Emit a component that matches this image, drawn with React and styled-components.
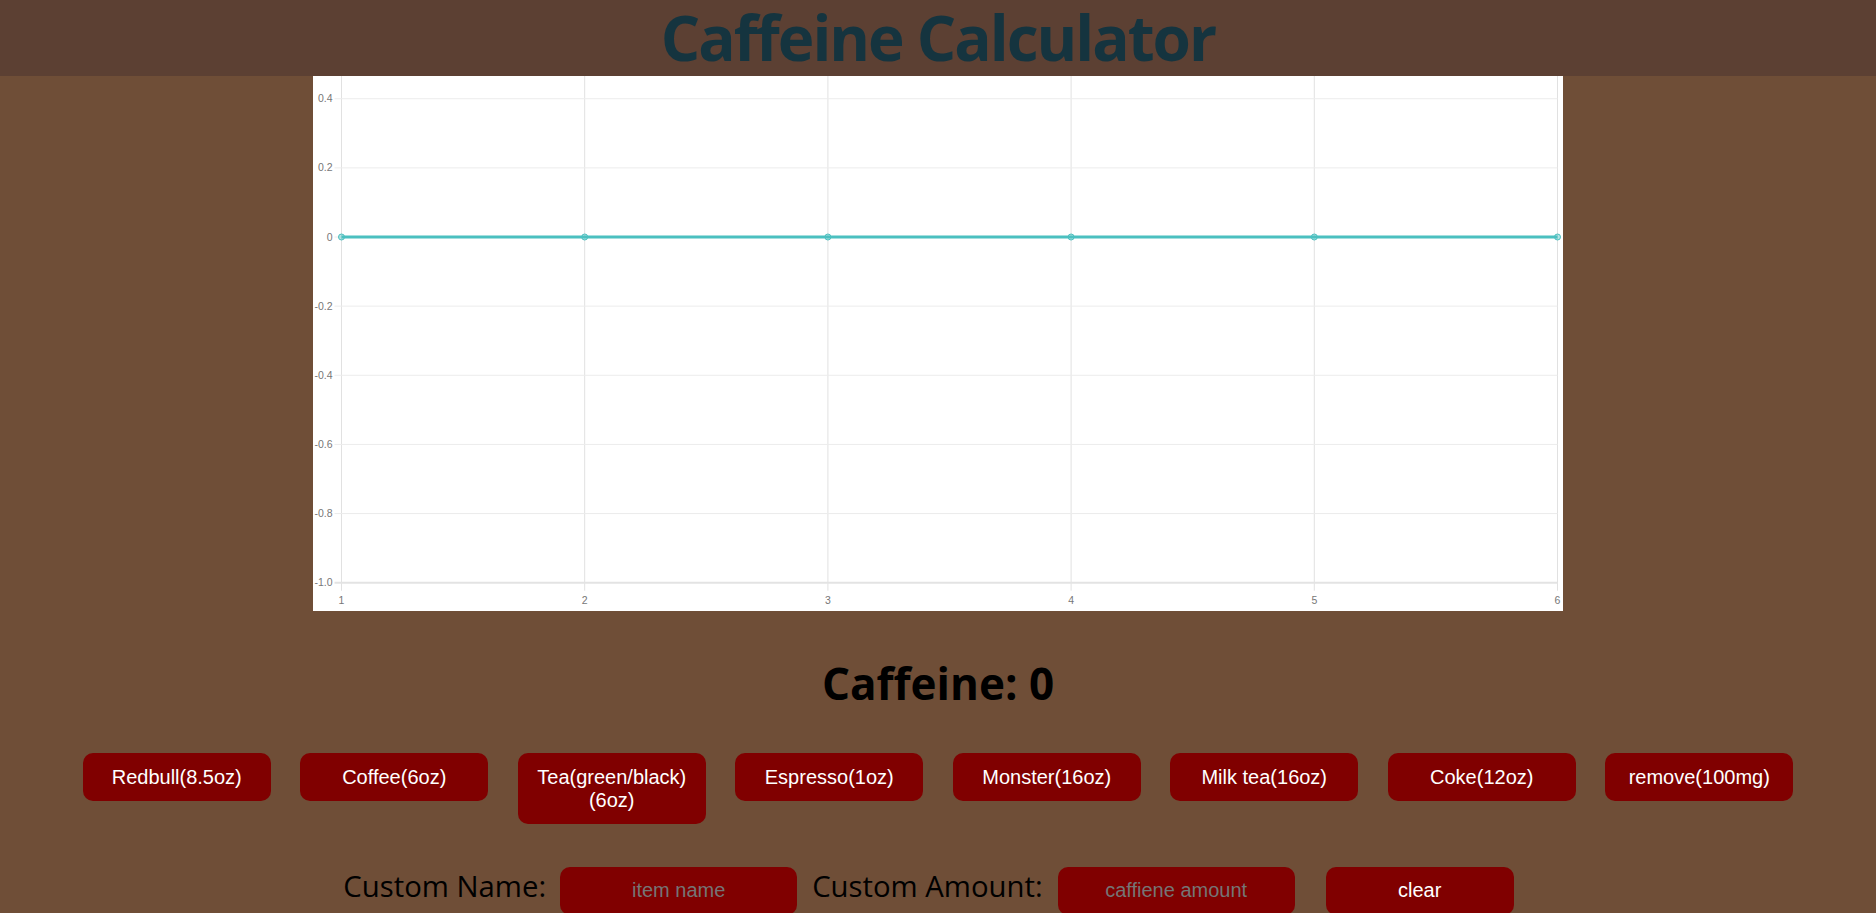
import React from "react";
import styled, { createGlobalStyle } from "styled-components";

const GlobalStyle = createGlobalStyle`
  html, body { margin: 0; padding: 0; }
  body {
    background: #6f4e37;
    font-family: "Open Sans", "Noto Sans", sans-serif;
    overflow: hidden;
  }
`;

const Header = styled.header`
  height: 76px;
  box-sizing: border-box;
  padding-top: 6px;
  background: #5c4033;
  display: flex;
  justify-content: center;
  align-items: flex-start;
`;

const Title = styled.h1`
  margin: 0;
  font-size: 62px;
  line-height: 1;
  font-weight: 700;
  letter-spacing: -2px;
  color: #15343f;
`;

const ChartBox = styled.div`
  width: 1250px;
  height: 535px;
  margin: 0 auto;
  background: #ffffff;
`;

const Total = styled.h2`
  margin: 42px 0 0;
  text-align: center;
  font-size: 44px;
  font-weight: 700;
  color: #000;
`;

const ButtonRow = styled.div`
  display: flex;
  justify-content: center;
  align-items: flex-start;
  gap: 29.5px;
  margin-top: 40px;
`;

const DrinkButton = styled.button`
  width: 188px;
  padding: 12.5px 14px;
  border: none;
  border-radius: 10px;
  background: #800000;
  color: #ffffff;
  font-family: "Liberation Sans", Arial, sans-serif;
  font-size: 20px;
  line-height: 23px;
  text-align: center;
  cursor: pointer;
`;

const InputRow = styled.div`
  display: flex;
  justify-content: center;
  align-items: baseline;
  margin-top: 42px;
  padding-right: 19px;
`;

const Label = styled.label`
  font-size: 29.3px;
  color: #000;
  margin-left: ${(p) => p.$gap || 0}px;
`;

const CustomInput = styled.input`
  width: 237px;
  height: 48px;
  box-sizing: border-box;
  margin-left: ${(p) => p.$gap || 0}px;
  border: none;
  border-radius: 10px;
  background: #800000;
  color: #ffffff;
  text-align: center;
  font-family: "Liberation Sans", Arial, sans-serif;
  font-size: 20px;
  outline: none;
  &::placeholder { color: #757575; }
`;

const ClearButton = styled(DrinkButton)`
  margin-left: 31px;
  height: 48px;
`;

const W = 1250;
const H = 535;
const X0 = 28.5;
const XSTEP = 243.2;
const Y0 = 161;
const YSTEP = 69.14;

const yTicks = [0.4, 0.2, 0, -0.2, -0.4, -0.6, -0.8, -1.0];
const xTicks = [1, 2, 3, 4, 5, 6];

const yPos = (v) => Y0 - (v / 0.2) * YSTEP;
const fmt = (v) => (v === 0 ? "0" : v === -1 ? "-1.0" : v.toFixed(1));

function Chart() {
  const bottom = yPos(-1.0);
  const right = X0 + XSTEP * 5;
  return (
    <svg width={W} height={H} viewBox={`0 0 ${W} ${H}`}>
      {xTicks.map((t, i) => (
        <line
          key={`v${t}`}
          x1={X0 + XSTEP * i}
          x2={X0 + XSTEP * i}
          y1={0}
          y2={bottom + 8}
          stroke="#e1e1e1"
          strokeWidth="1"
        />
      ))}
      {yTicks.map((t) => (
        <line
          key={`h${t}`}
          x1={X0 - 7}
          x2={right}
          y1={yPos(t)}
          y2={yPos(t)}
          stroke={t === -1.0 ? "#e3e3e3" : "#ececec"}
          strokeWidth={t === -1.0 ? 2 : 1}
        />
      ))}
      {yTicks.map((t) => (
        <text
          key={`yl${t}`}
          x={X0 - 9}
          y={yPos(t) + 3.5}
          textAnchor="end"
          fontFamily="'Liberation Sans', Arial, sans-serif"
          fontSize="10.5"
          fill="#777"
        >
          {fmt(t)}
        </text>
      ))}
      {xTicks.map((t, i) => (
        <text
          key={`xl${t}`}
          x={X0 + XSTEP * i}
          y={528}
          textAnchor="middle"
          fontFamily="'Liberation Sans', Arial, sans-serif"
          fontSize="10.5"
          fill="#777"
        >
          {t}
        </text>
      ))}
      <line x1={X0} x2={right} y1={Y0} y2={Y0} stroke="#4bc0c0" strokeWidth="3" />
      {xTicks.map((t, i) => (
        <circle
          key={`p${t}`}
          cx={X0 + XSTEP * i}
          cy={Y0}
          r="3"
          fill="rgba(75,192,192,0.4)"
          stroke="#4bc0c0"
          strokeWidth="1"
        />
      ))}
    </svg>
  );
}

const drinks = [
  "Redbull(8.5oz)",
  "Coffee(6oz)",
  "Tea(green/black) (6oz)",
  "Espresso(1oz)",
  "Monster(16oz)",
  "Milk tea(16oz)",
  "Coke(12oz)",
  "remove(100mg)",
];

export default function App() {
  return (
    <>
      <GlobalStyle />
      <Header>
        <Title>Caffeine Calculator</Title>
      </Header>
      <ChartBox>
        <Chart />
      </ChartBox>
      <Total>Caffeine: 0</Total>
      <ButtonRow>
        {drinks.map((d) => (
          <DrinkButton key={d}>{d}</DrinkButton>
        ))}
      </ButtonRow>
      <InputRow>
        <Label>Custom Name:</Label>
        <CustomInput $gap={14} placeholder="item name" />
        <Label $gap={15}>Custom Amount:</Label>
        <CustomInput $gap={15} placeholder="caffiene amount" />
        <ClearButton>clear</ClearButton>
      </InputRow>
    </>
  );
}
